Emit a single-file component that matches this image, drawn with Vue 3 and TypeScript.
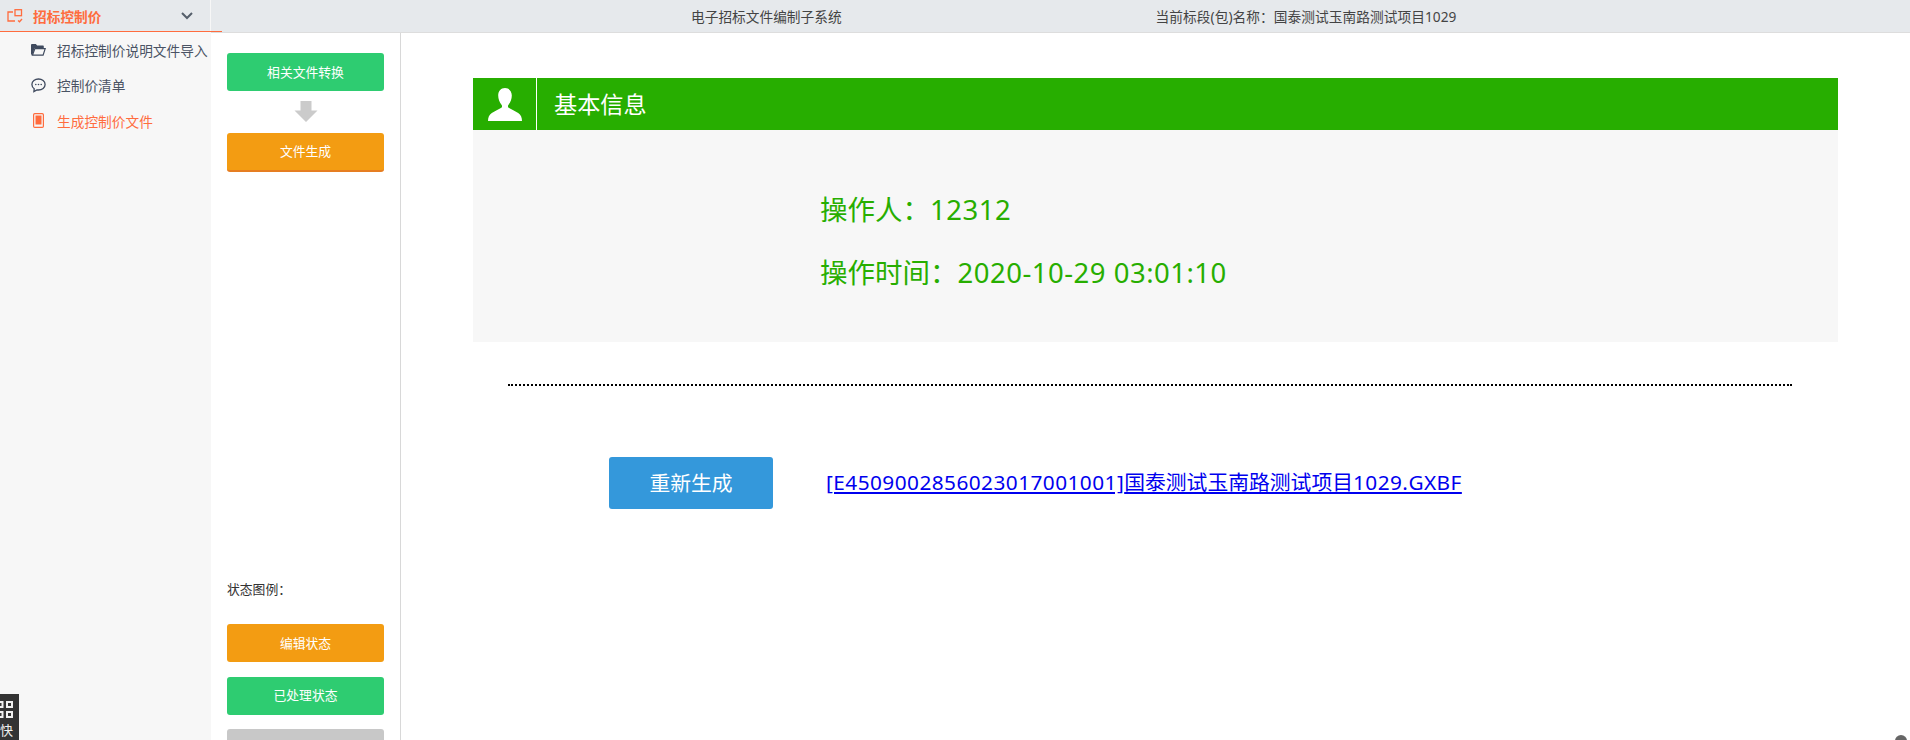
<script setup lang="ts">
const subItems = [
  { label: '招标控制价说明文件导入', icon: 'folder', active: false },
  { label: '控制价清单', icon: 'chat', active: false },
  { label: '生成控制价文件', icon: 'phone', active: true },
]
</script>

<template>
  <div class="app">
    <aside class="sidebar">
      <div class="side-head">
        <svg class="head-icon" width="16" height="14" viewBox="0 0 16 14" fill="none" stroke="#ff6c3e" stroke-width="1.3">
          <path d="M6 3H1v9h7" />
          <rect x="8" y="0.7" width="6.5" height="6" />
          <path d="M11 11.5l1.5 1.3 2.5-2.8" />
        </svg>
        <span class="head-title">招标控制价</span>
        <svg class="chev" width="12" height="8" viewBox="0 0 12 8" fill="none" stroke="#555f6b" stroke-width="2">
          <path d="M1 1l5 5 5-5" />
        </svg>
      </div>
      <ul class="side-list">
        <li v-for="item in subItems" :key="item.label" class="side-item" :class="{ active: item.active }">
          <span class="side-icon">
            <svg v-if="item.icon === 'folder'" width="15" height="12" viewBox="0 0 15 12">
              <path fill="#3f4a5e" d="M0 1.2C0 .5.5 0 1.2 0h3.600l1.400 1.600h5.600c.6 0 1 .4 1 1V4H3.600L1.500 10.500H1L0 10.800z" />
              <path fill="none" stroke="#3f4a5e" stroke-width="1.2" d="M3.900 4.600h10.300l-2.100 6.600H1.400z" />
            </svg>
            <svg v-else-if="item.icon === 'chat'" width="15" height="15" viewBox="0 0 15 15">
              <path fill="none" stroke="#3f4a5e" stroke-width="1.3" d="M7.500 1C3.900 1 .9 3.400.9 6.500c0 1.700.9 3.200 2.300 4.200L2.900 13.600l3-1.700c.5.1 1 .1 1.600.1 3.600 0 6.600-2.400 6.600-5.500S11.100 1 7.500 1z" />
              <circle cx="4.800" cy="6.500" r=".8" fill="#3f4a5e" />
              <circle cx="7.500" cy="6.500" r=".8" fill="#3f4a5e" />
              <circle cx="10.200" cy="6.500" r=".8" fill="#3f4a5e" />
            </svg>
            <svg v-else width="11" height="15" viewBox="0 0 11 15">
              <rect x=".6" y=".6" width="9.800" height="13.800" rx="1.200" fill="none" stroke="#ff6c3e" stroke-width="1.200" />
              <rect x="2.500" y="2.500" width="6" height="9" fill="#ff6c3e" />
            </svg>
          </span>
          <span>{{ item.label }}</span>
        </li>
      </ul>
    </aside>

    <div class="right">
      <header class="top">
        <span class="sys">电子招标文件编制子系统</span>
        <span class="cur">当前标段(包)名称：国泰测试玉南路测试项目1029</span>
      </header>
      <div class="body">
        <section class="steps">
          <div class="step-top">
            <button class="btn green">相关文件转换</button>
            <svg class="arrow" width="24" height="21" viewBox="0 0 24 21">
              <path fill="#cbcbcb" d="M6.500 0h11v9.500H23.500L12 21 .5 9.500h6z" />
            </svg>
            <button class="btn orange edge">文件生成</button>
          </div>
          <div class="legend">
            <div class="legend-title">状态图例：</div>
            <button class="btn orange">编辑状态</button>
            <button class="btn green">已处理状态</button>
            <button class="btn gray"></button>
          </div>
        </section>

        <main class="main">
          <div class="bar">
            <div class="bar-icon">
              <svg width="34" height="33" viewBox="0 0 34 33">
                <path fill="#fff" d="M17 0c4.300 0 6.800 3.300 6.800 7.600 0 3.500-1.300 7.100-3.300 9.100-.8.800-.8 2.300.2 3.100 1.800 1.300 6.100 3.100 9.500 5.300C32.800 26.700 34 29.500 34 33H0c0-3.500 1.200-6.300 3.800-7.900 3.400-2.200 7.700-4 9.500-5.300 1-.8 1-2.300.2-3.100-2-2-3.300-5.600-3.300-9.100C10.200 3.300 12.700 0 17 0z" />
              </svg>
            </div>
            <h2 class="bar-title">基本信息</h2>
          </div>
          <div class="panel">
            <p>操作人：<span class="num">12312</span></p>
            <p>操作时间：<span class="num">2020-10-29 03:01:10</span></p>
          </div>
          <div class="dots"></div>
          <div class="result">
            <button class="regen">重新生成</button>
            <a class="file" href="#"><span class="lat">[E4509002856023017001001]</span>国泰测试玉南路测试项目<span class="lat">1029.GXBF</span></a>
          </div>
        </main>
      </div>
    </div>

    <div class="float-tool">
      <svg width="14" height="17" viewBox="0 0 14 17" fill="none" stroke="#f0f0f0" stroke-width="2">
        <rect x="-2.500" y="1" width="5" height="5" />
        <rect x="7" y="1" width="5" height="5" />
        <rect x="-2.500" y="11" width="5" height="5" />
        <rect x="7" y="11" width="5" height="5" />
      </svg>
      <span>快</span>
    </div>
    <div class="corner-blob"></div>
  </div>
</template>

<style>
html, body { margin: 0; padding: 0; background: #fff; }
</style>

<style scoped>
.app {
  position: relative;
  display: flex;
  width: 1910px;
  height: 740px;
  overflow: hidden;
  background: #fff;
  font-family: "Noto Sans", "Noto Sans CJK SC", sans-serif;
}
.sidebar {
  width: 211px;
  flex: none;
  background: #f7f7f7;
}
.side-head {
  position: relative;
  display: flex;
  align-items: center;
  box-sizing: border-box;
  width: 210px;
  height: 32px;
  padding-left: 7px;
  background: #e6e9ec;
  border-bottom: 1px solid #ff6c3e;
}
.side-head::after {
  content: "";
  position: absolute;
  left: 210px;
  bottom: -1px;
  width: 12px;
  height: 1px;
  background: #ff6c3e;
}
.head-title {
  margin-left: 10px;
  font-size: 13.7px;
  font-weight: 700;
  color: #ff6c3e;
}
.chev { margin-left: 80px; }
.side-list {
  list-style: none;
  margin: 0;
  padding: 0;
}
.side-item {
  display: flex;
  align-items: center;
  height: 35.5px;
  padding-left: 31px;
  font-size: 13.7px;
  color: #4a5364;
  white-space: nowrap;
}
.side-item.active { color: #ff6c3e; }
.side-icon {
  display: flex;
  justify-content: center;
  width: 15px;
  margin-right: 11px;
}
.right {
  flex: 1;
  min-width: 0;
  display: flex;
  flex-direction: column;
}
.top {
  display: flex;
  align-items: center;
  box-sizing: border-box;
  height: 33px;
  padding-left: 480px;
  background: #e6e9ec;
  border-bottom: 1px solid #ddd;
  font-size: 13.7px;
  color: #444;
}
.cur { margin-left: 314px; letter-spacing: .05px; }
.body {
  flex: 1;
  display: flex;
  min-height: 0;
}
.steps {
  display: flex;
  flex-direction: column;
  box-sizing: border-box;
  width: 190px;
  flex: none;
  padding: 20px 16px 0;
  border-right: 1px solid #d8d8d8;
}
.step-top {
  display: flex;
  flex-direction: column;
  align-items: center;
}
.arrow { margin: 10px 0 11px; display: block; }
.btn {
  display: block;
  flex: none;
  box-sizing: border-box;
  width: 157px;
  height: 38px;
  padding: 0 0 2px;
  border: 0;
  border-radius: 3px;
  color: #fff;
  font: inherit;
  font-size: 12.8px;
  text-align: center;
}
.green { background: #2ecc71; }
.orange { background: #f39c12; }
.orange.edge { height: 39px; border-bottom: 2px solid #e67e22; }
.gray { background: #c8c8c8; }
.legend {
  display: flex;
  flex-direction: column;
  gap: 14.5px;
  flex: none;
  margin-top: 408px;
}
.legend-title {
  height: 18px;
  margin-bottom: 11.5px;
  font-size: 12.8px;
  line-height: 18px;
  color: #333;
}
.main {
  flex: 1;
  min-width: 0;
  padding: 45px 72px 0 72px;
}
.bar {
  display: flex;
  align-items: center;
  height: 52px;
  background: #27ae00;
}
.bar-icon {
  display: flex;
  align-items: center;
  justify-content: center;
  box-sizing: border-box;
  width: 64px;
  height: 52px;
  border-right: 1px solid #fff;
}
.bar-title {
  margin: -2px 0 0 17px;
  font-size: 23.2px;
  font-weight: 400;
  color: #fff;
}
.panel {
  box-sizing: border-box;
  height: 212px;
  padding: 59px 0 0 347px;
  background: #f7f7f7;
  font-size: 27.5px;
  line-height: 42px;
  color: #27ae00;
}
.panel p { margin: 0 0 21px; }
.num { letter-spacing: .5px; }
.dots {
  height: 0;
  margin: 42px 46px 0 35px;
  border-top: 2px dotted #000;
}
.result {
  display: flex;
  align-items: center;
  margin: 71px 0 0 136px;
}
.regen {
  width: 164px;
  height: 52px;
  padding: 0 0 3px;
  border: 0;
  border-radius: 3px;
  background: #3498db;
  color: #fff;
  font: inherit;
  font-size: 20.8px;
}
.file {
  margin: -4px 0 0 53px;
  font-size: 20.8px;
  color: #0000ee;
  white-space: nowrap;
  text-decoration: underline;
}
.lat { letter-spacing: .45px; }
.float-tool {
  position: absolute;
  left: 0;
  bottom: 0;
  display: flex;
  flex-direction: column;
  align-items: flex-start;
  width: 19px;
  height: 46px;
  padding-top: 7px;
  box-sizing: border-box;
  background: #333;
  color: #eee;
  font-size: 13px;
  line-height: 18px;
}
.float-tool svg { flex: none; }
.float-tool span { margin-top: 3px; }
.corner-blob {
  position: absolute;
  right: 3px;
  bottom: -7px;
  width: 12px;
  height: 12px;
  border-radius: 50%;
  background: #666;
}
</style>
